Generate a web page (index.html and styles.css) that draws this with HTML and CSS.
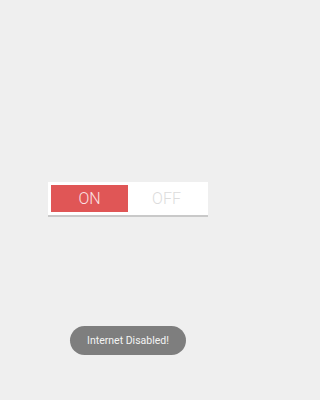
FILE: index.html
```html
<!DOCTYPE html>
<html>
<head>
<meta charset="utf-8">
<link rel="stylesheet" href="styles.css">
</head>
<body>
<div class="screen">
  <div class="switch">
    <div class="seg seg-on">ON</div>
    <div class="seg seg-off">OFF</div>
  </div>
  <div class="toast">Internet Disabled!</div>
</div>
</body>
</html>
```
FILE: styles.css
```css
html, body {
  margin: 0;
  padding: 0;
  background: #efefef;
}
.screen {
  width: 256px;
  height: 400px;
  display: flex;
  flex-direction: column;
  align-items: center;
  font-family: Roboto, "Noto Sans", sans-serif;
}
.switch {
  margin-top: 182px;
  flex: none;
  width: 160px;
  height: 33px;
  box-sizing: border-box;
  padding: 3px;
  background: #ffffff;
  display: flex;
  box-shadow: 0 2px 0 #c9c9c9;
}
.seg {
  flex: 1;
  display: flex;
  align-items: center;
  justify-content: center;
  font-size: 16px;
  font-weight: 300;
}
.seg-on {
  background: #e05656;
  color: #fbe3e3;
}
.seg-off {
  color: #dcdcdc;
}
.toast {
  margin-top: 111px;
  flex: none;
  width: 116px;
  height: 29px;
  border-radius: 15px;
  background: #7e7e7e;
  color: #f4f4f4;
  font-size: 10.5px;
  display: flex;
  align-items: center;
  justify-content: center;
}
```
